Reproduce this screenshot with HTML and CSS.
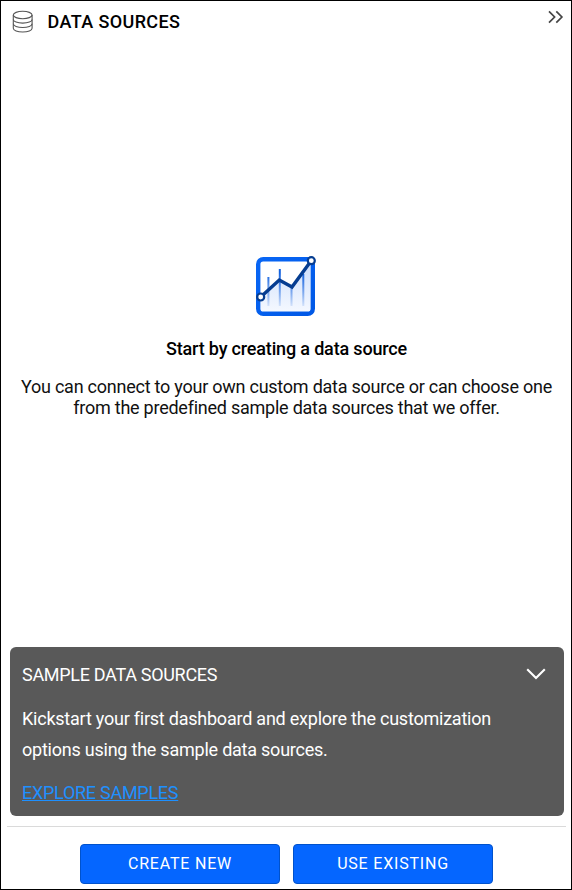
FILE: index.html
```html
<!DOCTYPE html>
<html lang="en">
<head>
<meta charset="utf-8">
<title>Data Sources</title>
<link rel="stylesheet" href="styles.css">
</head>
<body>
<main class="panel">
  <header class="panel-header">
    <svg class="db-icon" width="22" height="24" viewBox="0 0 22 24" fill="none" stroke="#555" stroke-width="1.1">
      <ellipse cx="10.7" cy="5" rx="9.4" ry="3.7"/>
      <path d="M1.3 5v13.3c0 2.1 4.2 3.7 9.4 3.7s9.4-1.6 9.4-3.7V5"/>
      <path d="M1.3 9.4c0 2.1 4.2 3.7 9.4 3.7s9.4-1.6 9.4-3.7M1.3 13.8c0 2.1 4.2 3.7 9.4 3.7s9.4-1.6 9.4-3.7"/>
    </svg>
    <h1 class="panel-title"><span>DATA SOURCES</span></h1>
    <svg class="collapse-icon" width="16" height="14" viewBox="0 0 16 14" fill="none" stroke="#444" stroke-width="1.7">
      <path d="M1 1.3l5.6 5.7L1 12.7M8.3 1.3l5.6 5.7-5.6 5.7"/>
    </svg>
  </header>
  <section class="empty-state">
    <svg class="chart-icon" width="62" height="62" viewBox="0 0 62 62" fill="none">
      <defs>
        <linearGradient id="area" x1="0" y1="0" x2="0" y2="1"><stop offset="0" stop-color="#cfdffb"/><stop offset="1" stop-color="#f4f8ff"/></linearGradient>
        <linearGradient id="bar" gradientUnits="userSpaceOnUse" x1="0" y1="18" x2="0" y2="53"><stop offset="0" stop-color="#1261df"/><stop offset="1" stop-color="#1261df" stop-opacity=".08"/></linearGradient>
        <linearGradient id="frame" x1="0" y1="0" x2="1" y2="1"><stop offset="0" stop-color="#0866f5"/><stop offset="1" stop-color="#0058e6"/></linearGradient>
      </defs>
      <rect x="3.2" y="4.2" width="54.6" height="54.6" rx="5" stroke="url(#frame)" stroke-width="4.4"/>
      <path d="M6 41l19-17 12 7L55 8v48H6z" fill="url(#area)"/>
      <path d="M12.4 22h2v29h-2zM23.8 14h2v37h-2zM35.5 31h2v20h-2zM47.3 19h2v32h-2z" fill="url(#bar)"/>
      <path d="M5.7 42l18.6-17 12.7 7L56 6" stroke="#063d91" stroke-width="3.4"/>
      <circle cx="5.7" cy="42" r="3.5" fill="#fff" stroke="#063d91" stroke-width="2.2"/>
      <circle cx="56.3" cy="5.7" r="3.5" fill="#fff" stroke="#063d91" stroke-width="2.2"/>
    </svg>
    <h2 class="empty-title"><span>Start by creating a data source</span></h2>
    <p class="empty-text">You can connect to your own custom data source or can choose one<br>from the predefined sample data sources that we offer.</p>
  </section>
  <section class="samples">
    <div class="samples-header">
      <h3 class="samples-title"><span>SAMPLE DATA SOURCES</span></h3>
      <svg class="expand-icon" width="20" height="12" viewBox="0 0 20 12" fill="none" stroke="#fff" stroke-width="2.1"><path d="M1.2 1.3l8.8 8.8 8.8-8.8"/></svg>
    </div>
    <p class="samples-text">Kickstart your first dashboard and explore the customization<br>options using the sample data sources.</p>
    <a class="samples-link" href="#">EXPLORE SAMPLES</a>
  </section>
  <footer class="actions">
    <button class="button">CREATE NEW</button>
    <button class="button">USE EXISTING</button>
  </footer>
</main>
</body>
</html>
```
FILE: styles.css
```css
* { box-sizing: border-box; }
body { margin: 0; font-family: Roboto, "Liberation Sans", sans-serif; color: #000; background: #fff; }
h1, h2, h3, p { margin: 0; }
svg { display: block; flex: none; }
.panel { height: 890px; border: 1px solid #000; display: flex; flex-direction: column; }
.panel-header { height: 42px; display: flex; align-items: center; padding: 0 7px 0 11px; }
.panel-title { flex: 1; margin-left: 13.6px; font-size: 18px; line-height: 20px; font-weight: 500; letter-spacing: .38px; }
.collapse-icon { margin-bottom: 10px; }
.empty-state { height: 604px; display: flex; flex-direction: column; align-items: center; padding-top: 212px; padding-left: 1px; text-align: center; }
.chart-icon { margin-right: 1px; }
.empty-title { margin-top: 21px; font-size: 18px; line-height: 21px; font-weight: 500; letter-spacing: -.17px; }
.empty-text { margin-top: 17px; font-size: 18px; line-height: 21px; font-weight: 400; letter-spacing: -.24px; color: #111; white-space: nowrap; }
.samples { height: 169px; margin: 0 7px 0 9px; padding: 17px 18px 0 12px; border-radius: 6px; background: #595959; color: #fff; }
.samples-header { display: flex; align-items: center; justify-content: space-between; }
.samples-title { font-size: 18px; line-height: 21px; font-weight: 400; letter-spacing: -.3px; }
.expand-icon { margin-bottom: 2px; }
.samples-text { margin-top: 18px; font-size: 18px; line-height: 31px; letter-spacing: -.23px; white-space: nowrap; }
.samples-link { display: inline-block; margin-top: 17px; font-size: 18px; line-height: 21px; letter-spacing: -.27px; color: #1e90ff; }
.actions { margin: 10px 5px 0 6px; padding-top: 17px; border-top: 1px solid #dadada; display: flex; justify-content: center; gap: 13px; }
.button { width: 200px; height: 40px; padding: 0; border: 1px solid #0052cc; border-radius: 4px; background: #0566ff; color: #fff; font: 400 16px/20px Roboto, "Liberation Sans", sans-serif; letter-spacing: .8px; }
```
